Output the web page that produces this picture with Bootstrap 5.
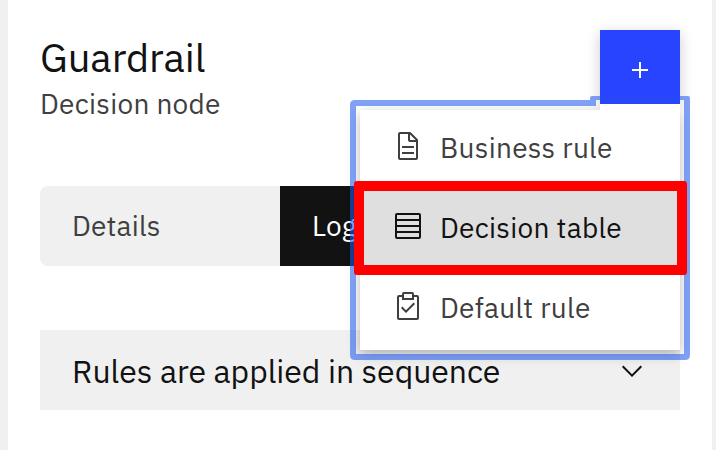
<!DOCTYPE html>
<html lang="en">
<head>
<meta charset="utf-8">
<meta name="viewport" content="width=device-width, initial-scale=1">
<title>Guardrail</title>
<link href="https://cdn.jsdelivr.net/npm/bootstrap@5.3.0/dist/css/bootstrap.min.css" rel="stylesheet">
<style>
body { font-family: "IBM Plex Sans", "Noto Sans CJK JP", sans-serif; background: #f0f0f0; color: #121212; height: 450px; overflow: hidden; }
.panel { height: 450px; margin: 0 4px 0 8px; padding: 32px 32px 0; background: #fff; }
.headline { font-size: 40px; line-height: 46px; font-weight: 400; padding-top: 2px; letter-spacing: -.08px; }
.subline { font-size: 28px; line-height: 40px; color: #3f3f3f; letter-spacing: .26px; margin-top: 4px; }
.head-block { height: 154px; }
.tabs { height: 80px; width: 480px; background: #f0f0f0; border-radius: 8px; font-size: 28px; overflow: hidden; }
.tab-item { width: 240px; padding: 0 32px; color: #3f3f3f; letter-spacing: .2px; }
.tab-item.current { background: #121212; color: #fff; }
.section-bar { height: 80px; margin-top: 64px; padding: 0 32px; background: #f0f0f0; font-size: 32px; letter-spacing: -.03px; }
.section-bar span { padding-top: 2px; }
.add-btn { position: absolute; left: 600px; top: 30px; width: 80px; height: 74px; padding: 0; background: #2944ff; border: 0; border-radius: 0; box-shadow: 0 4px 14px rgba(0,0,0,.2); }
.add-btn svg { margin-top: 6px; }
.flyout { position: absolute; left: 360px; top: 110px; width: 320px; background: #fff; box-shadow: 0 4px 12px rgba(0,0,0,.28); }
.joint { position: absolute; left: 600px; top: 104px; width: 80px; height: 10px; background: #fff; }
.flyout-item { height: 80px; padding: 0 32px 8px; gap: 16px; font-size: 28px; color: #3f3f3f; letter-spacing: .28px; }
.flyout-item.active-item { background: #dfdfdf; color: #121212; }
.flyout-item span { padding-top: 3px; }
.ring { position: absolute; left: 350px; top: 96px; }
.marker { position: absolute; left: 354px; top: 181px; width: 333px; height: 94px; border: 10px solid #f00; border-radius: 3px; }
svg { display: block; flex: none; }
</style>
<script src="https://cdn.jsdelivr.net/npm/bootstrap@5.3.0/dist/js/bootstrap.bundle.min.js"></script>
</head>
<body class="position-relative">
<main class="panel">
  <header class="head-block">
    <h1 class="headline mb-0">Guardrail</h1>
    <p class="subline mb-0">Decision node</p>
  </header>
  <nav class="tabs d-flex">
    <div class="tab-item d-flex align-items-center">Details</div>
    <div class="tab-item current d-flex align-items-center">Logic</div>
  </nav>
  <section class="section-bar d-flex align-items-center justify-content-between">
    <span class="text-nowrap">Rules are applied in sequence</span>
    <svg width="32" height="32" viewBox="0 0 32 32"><path fill="#121212" d="M16 23 6 13l1.4-1.4 8.6 8.6 8.6-8.6L26 13z"/></svg>
  </section>
</main>
<button class="btn add-btn d-flex align-items-center justify-content-center" aria-label="Add">
  <svg width="32" height="32" viewBox="0 0 32 32"><path fill="#fff" d="M17 15V8h-2v7H8v2h7v7h2v-7h7v-2z"/></svg>
</button>
<div class="flyout">
  <div class="flyout-item d-flex align-items-center">
    <svg width="32" height="32" viewBox="0 0 32 32" fill="currentColor"><path d="M25.7 9.3l-7-7A.9.9 0 0 0 18 2H8a2 2 0 0 0-2 2v24a2 2 0 0 0 2 2h16a2 2 0 0 0 2-2V10a.9.9 0 0 0-.3-.7zM18 4.4l5.6 5.6H18zM24 28H8V4h8v6a2 2 0 0 0 2 2h6z"/><path d="M10 22h12v2H10zM10 16h12v2H10z"/></svg>
    <span class="text-nowrap">Business rule</span>
  </div>
  <div class="flyout-item active-item d-flex align-items-center">
    <svg width="32" height="32" viewBox="0 0 32 32" fill="none" stroke="currentColor" stroke-width="2"><rect x="4" y="4" width="24" height="24" rx="1"/><path d="M4 10h24M4 16h24M4 22h24"/></svg>
    <span class="text-nowrap">Decision table</span>
  </div>
  <div class="flyout-item d-flex align-items-center">
    <svg width="32" height="32" viewBox="0 0 32 32" fill="currentColor"><path d="M14 20.2l-3.6-3.6L9 18l5 5 9-9-1.4-1.4z"/><path d="M25 5h-3V4a2 2 0 0 0-2-2h-8a2 2 0 0 0-2 2v1H7a2 2 0 0 0-2 2v21a2 2 0 0 0 2 2h18a2 2 0 0 0 2-2V7a2 2 0 0 0-2-2zM12 4h8v4h-8zm13 24H7V7h3v3h12V7h3z"/></svg>
    <span class="text-nowrap">Default rule</span>
  </div>
</div>
<div class="joint"></div>
<svg class="ring" width="340" height="264" viewBox="0 0 340 264"><path fill="#225af0" fill-opacity=".57" fill-rule="evenodd" d="M5 4H240V2Q240 0 242 0H250V4H246V10H6V258H334V4H330V0H338Q340 0 340 2V259Q340 264 335 264H5Q0 264 0 259V9Q0 4 5 4Z"/><path fill="#2846fa" d="M250 0h80v8h-80z"/></svg>
<div class="marker"></div>
</body>
</html>
